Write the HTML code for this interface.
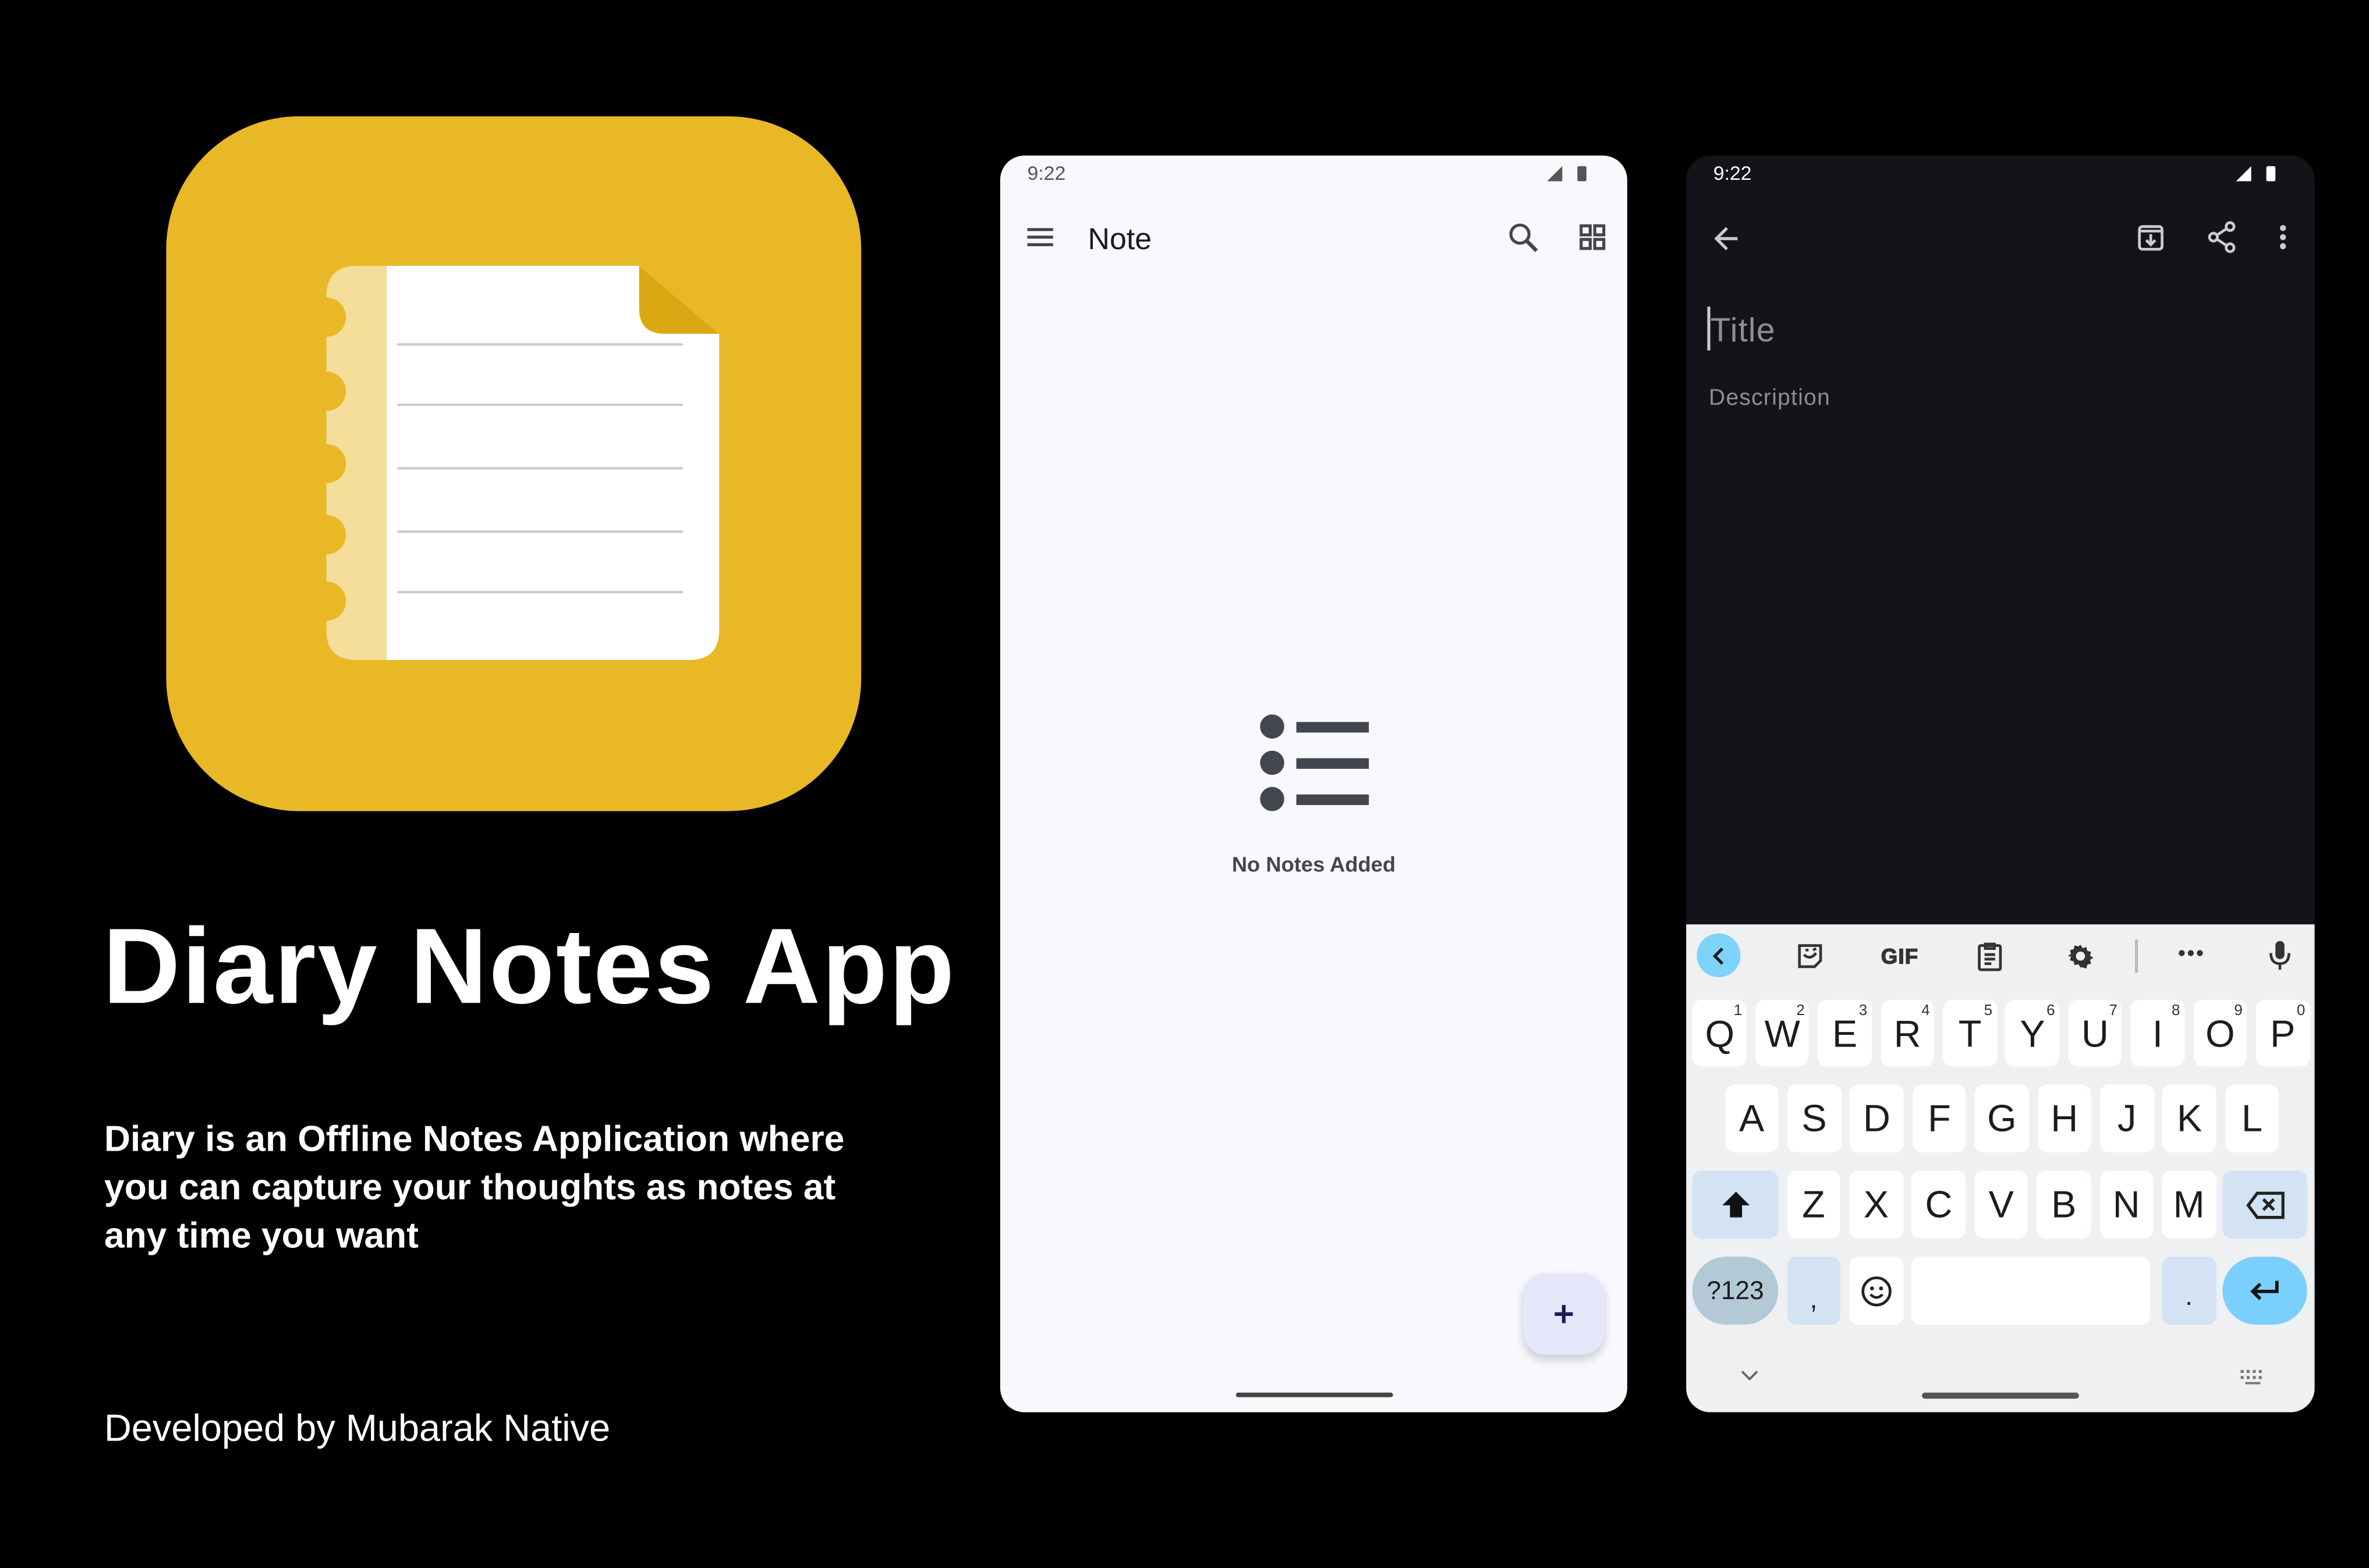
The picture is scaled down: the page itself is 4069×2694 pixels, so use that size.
<!DOCTYPE html>
<html><head><meta charset="utf-8"><style>
html,body{margin:0;padding:0;background:#000;}
body{width:4069px;height:2693px;overflow:hidden;position:relative;}
#w{position:absolute;left:0;top:0;width:1568px;height:1038px;transform:scale(2.5951);transform-origin:0 0;font-family:"Liberation Sans",sans-serif;}
.a{position:absolute;}
.t{position:absolute;white-space:nowrap;line-height:1;}
.k{position:absolute;background:#fff;border-radius:6px;width:35.7px;height:44.7px;font-size:25px;color:#1c1c1e;text-align:center;line-height:46px;}
.k sup{position:absolute;right:3px;top:3px;font-size:10px;color:#333;line-height:1;}
</style></head><body><div id="w">

<svg class="a" style="left:0;top:0" width="620" height="560" viewBox="0 0 620 560">
<rect x="110" y="77" width="460" height="460" rx="88" fill="#e9b826"/>
<path d="M236 176 H256 V437 H236 Q216 437 216 417 V411 A13 13 0 0 0 216 385 V367 A13 13 0 0 0 216 341 V320 A13 13 0 0 0 216 294 V272 A13 13 0 0 0 216 246 V223 A13 13 0 0 0 216 197 Q216 176 236 176Z" fill="#f4de9a"/>
<path d="M256 176 H423 L476 221 V417 Q476 437 456 437 H256Z" fill="#fff"/>
<path d="M423 176 L476 221 H440 Q423 221 423 204Z" fill="#d9a813"/>
<g stroke="#c8c8c8" stroke-width="1.5">
<line x1="263" y1="228" x2="452" y2="228"/><line x1="263" y1="268" x2="452" y2="268"/>
<line x1="263" y1="310" x2="452" y2="310"/><line x1="263" y1="352" x2="452" y2="352"/>
<line x1="263" y1="392" x2="452" y2="392"/></g>
</svg>

<div class="t" style="left:68px;top:605px;font-size:71px;font-weight:bold;color:#fff;letter-spacing:1px">Diary Notes App</div>
<div class="a" style="left:69px;top:739px;white-space:nowrap;font-size:24px;font-weight:bold;color:#fff;line-height:32px">Diary is an Offline Notes Application where<br>you can capture your thoughts as notes at<br>any time you want</div>
<div class="t" style="left:69px;top:934px;font-size:25px;color:#fff">Developed by Mubarak Native</div>

<div class="a" style="left:662px;top:103px;width:415px;height:832px;background:#f8f8fd;border-radius:16px;overflow:hidden">
<div class="t" style="left:18px;top:5px;font-size:13px;color:#555">9:22</div>
<svg class="a" style="left:360px;top:5px" width="30" height="14"><path d="M2 12 L12 2 V12Z" fill="#555"/><rect x="22" y="2" width="6" height="10" rx="1" fill="#555"/></svg>
<svg class="a" style="left:17px;top:46px" width="20" height="16"><rect x="1" y="2" width="17" height="2" fill="#44464f"/><rect x="1" y="7" width="17" height="2" fill="#44464f"/><rect x="1" y="12" width="17" height="2" fill="#44464f"/></svg>
<div class="t" style="left:58px;top:46px;font-size:20px;color:#1b1b1f">Note</div>
<svg class="a" style="left:336px;top:44px" width="22" height="22"><circle cx="8" cy="8" r="6" fill="none" stroke="#44464f" stroke-width="2"/><path d="M12.5 12.5 L19 19" stroke="#44464f" stroke-width="2.5"/></svg>
<svg class="a" style="left:383px;top:45px" width="20" height="20"><g fill="none" stroke="#44464f" stroke-width="2"><rect x="1.5" y="1.5" width="6" height="6"/><rect x="10.5" y="1.5" width="6" height="6"/><rect x="1.5" y="10.5" width="6" height="6"/><rect x="10.5" y="10.5" width="6" height="6"/></g></svg>
<svg class="a" style="left:170px;top:368px" width="80" height="70"><g fill="#44464f"><ellipse cx="10" cy="10" rx="8" ry="8"/><ellipse cx="10" cy="34" rx="8" ry="8"/><ellipse cx="10" cy="58" rx="8" ry="8"/><rect x="26" y="7" width="48" height="7"/><rect x="26" y="31" width="48" height="7"/><rect x="26" y="55" width="48" height="7"/></g></svg>
<div class="t" style="left:0;width:415px;text-align:center;top:462px;font-size:14px;font-weight:bold;color:#44464f">No Notes Added</div>
<div class="a" style="left:346px;top:740px;width:54px;height:54px;background:#e4e6fa;border-radius:15px;box-shadow:0 3px 6px rgba(0,0,0,0.18)"></div>
<svg class="a" style="left:365px;top:759px" width="16" height="16"><path d="M8 2V14M2 8H14" stroke="#1b1b4f" stroke-width="2.4"/></svg>
<div class="a" style="left:156px;top:819px;width:104px;height:3px;border-radius:2px;background:#444"></div>
</div>

<div class="a" style="left:1116px;top:103px;width:416px;height:832px;background:#131419;border-radius:16px;overflow:hidden">
<div class="t" style="left:18px;top:5px;font-size:13px;color:#fff">9:22</div>
<svg class="a" style="left:362px;top:5px" width="30" height="14"><path d="M2 12 L12 2 V12Z" fill="#fff"/><rect x="22" y="2" width="6" height="10" rx="1" fill="#fff"/></svg>
<svg class="a" style="left:17px;top:45px" width="20" height="20"><path d="M17 10H4M10 3L3 10L10 17" fill="none" stroke="#ccc" stroke-width="2"/></svg>
<svg class="a" style="left:298px;top:44px" width="20" height="22"><g fill="none" stroke="#ccc" stroke-width="1.8"><rect x="2" y="3" width="15" height="15" rx="2"/><path d="M2 6H17M9.5 8V15M6.5 12L9.5 15L12.5 12"/></g></svg>
<svg class="a" style="left:344px;top:43px" width="22" height="22"><g fill="none" stroke="#ccc" stroke-width="1.8"><circle cx="16" cy="4" r="2.6"/><circle cx="5" cy="11" r="2.6"/><circle cx="16" cy="18" r="2.6"/><path d="M7.3 9.7L13.7 5.4M7.3 12.3L13.7 16.6"/></g></svg>
<svg class="a" style="left:390px;top:44px" width="10" height="22"><g fill="#ccc"><circle cx="5" cy="4" r="2"/><circle cx="5" cy="10" r="2"/><circle cx="5" cy="16" r="2"/></g></svg>
<div class="a" style="left:14px;top:100px;width:1.5px;height:29px;background:#ccc"></div>
<div class="t" style="left:16px;top:105px;font-size:22px;color:#8e8f95;letter-spacing:0.5px">Title</div>
<div class="t" style="left:15px;top:153px;font-size:15px;color:#8e8f95;letter-spacing:0.5px">Description</div>

<div class="a" style="left:0;top:509px;width:416px;height:323px;background:#eff0f2">
<div class="a" style="left:7px;top:6px;width:29px;height:29px;border-radius:50%;background:#7dd3fc"></div>
<svg class="a" style="left:15px;top:14px" width="14" height="14"><path d="M9 2L4 7L9 12" fill="none" stroke="#1c1c1e" stroke-width="2"/></svg>
<svg class="a" style="left:72px;top:11px" width="20" height="20"><g fill="none" stroke="#333" stroke-width="1.8"><path d="M3 3H17V13L13 17H3Z"/><path d="M6 9Q10 13 14 8"/><path d="M7 6H9M12 6L14 5"/></g></svg>
<div class="t" style="left:129px;top:14px;font-size:14px;font-weight:bold;color:#333;letter-spacing:0.5px;-webkit-text-stroke:0.6px #333">GIF</div>
<svg class="a" style="left:191px;top:10px" width="20" height="22"><g fill="none" stroke="#333" stroke-width="1.8"><rect x="3" y="4" width="14" height="16" rx="1"/><path d="M7 3H13V6H7ZM6.5 10H13.5M6.5 13H13.5M6.5 16H11"/></g></svg>
<svg class="a" style="left:251px;top:11px" width="20" height="20"><path d="M10 2.5 l1.4 2.2 2.5-.7 .6 2.5 2.5.7-.7 2.5 2.2 1.4-2.2 1.4.7 2.5-2.5.7-.6 2.5-2.5-.7L10 17.5 8.6 15.3 6.1 16l-.6-2.5-2.5-.7.7-2.5L1.5 10 3.7 8.6 3 6.1l2.5-.7L6.1 2.9 8.6 3.6Z" fill="#333"/><circle cx="10" cy="10" r="3" fill="#eff0f2"/></svg>
<div class="a" style="left:297px;top:10px;width:1.5px;height:22px;background:#bbb"></div>
<svg class="a" style="left:324px;top:14px" width="20" height="10"><g fill="#333"><circle cx="4" cy="5" r="2"/><circle cx="10" cy="5" r="2"/><circle cx="16" cy="5" r="2"/></g></svg>
<svg class="a" style="left:385px;top:10px" width="16" height="22"><rect x="5" y="1" width="6" height="12" rx="3" fill="#333"/><path d="M2 9Q2 16 8 16Q14 16 14 9M8 16V20" fill="none" stroke="#333" stroke-width="1.8"/></svg>

<div class="k" style="left:4.4px;top:49.7px">Q<sup>1</sup></div>
<div class="k" style="left:45.8px;top:49.7px">W<sup>2</sup></div>
<div class="k" style="left:87.2px;top:49.7px">E<sup>3</sup></div>
<div class="k" style="left:128.6px;top:49.7px">R<sup>4</sup></div>
<div class="k" style="left:170px;top:49.7px">T<sup>5</sup></div>
<div class="k" style="left:211.4px;top:49.7px">Y<sup>6</sup></div>
<div class="k" style="left:252.8px;top:49.7px">U<sup>7</sup></div>
<div class="k" style="left:294.2px;top:49.7px">I<sup>8</sup></div>
<div class="k" style="left:335.6px;top:49.7px">O<sup>9</sup></div>
<div class="k" style="left:377px;top:49.7px">P<sup>0</sup></div>

<div class="k" style="left:25.5px;top:106.3px">A</div>
<div class="k" style="left:66.9px;top:106.3px">S</div>
<div class="k" style="left:108.3px;top:106.3px">D</div>
<div class="k" style="left:149.7px;top:106.3px">F</div>
<div class="k" style="left:191.1px;top:106.3px">G</div>
<div class="k" style="left:232.5px;top:106.3px">H</div>
<div class="k" style="left:273.9px;top:106.3px">J</div>
<div class="k" style="left:315.3px;top:106.3px">K</div>
<div class="k" style="left:356.7px;top:106.3px">L</div>

<div class="k" style="left:4.4px;top:163px;width:56.3px;background:#d3e3f3"></div>
<svg class="a" style="left:22px;top:175px" width="22" height="22"><path d="M11 2L20 11H15V19H7V11H2Z" fill="#111"/></svg>
<div class="k" style="left:66.5px;top:163px">Z</div>
<div class="k" style="left:107.9px;top:163px">X</div>
<div class="k" style="left:149.3px;top:163px">C</div>
<div class="k" style="left:190.7px;top:163px">V</div>
<div class="k" style="left:232.1px;top:163px">B</div>
<div class="k" style="left:273.5px;top:163px">N</div>
<div class="k" style="left:314.9px;top:163px">M</div>
<div class="k" style="left:354.9px;top:163px;width:56.6px;background:#d3e3f3"></div>
<svg class="a" style="left:370px;top:176px" width="28" height="20"><g fill="none" stroke="#222" stroke-width="2"><path d="M8 2H25V18H8L2 10Z"/><path d="M12 6L19 13M19 6L12 13"/></g></svg>

<div class="k" style="left:4.4px;top:219.6px;width:56.3px;height:45.4px;border-radius:23px;background:#b3c9d6;font-size:17px;line-height:46px">?123</div>
<div class="k" style="left:66.5px;top:219.6px;height:45.4px;background:#d3e3f3;line-height:56px;font-size:18px">,</div>
<div class="k" style="left:107.9px;top:219.6px;height:45.4px"></div>
<svg class="a" style="left:115px;top:232px" width="22" height="22"><g fill="none" stroke="#222" stroke-width="1.8"><circle cx="11" cy="11" r="9"/><path d="M7 13Q11 17 15 13"/></g><circle cx="8" cy="9" r="1.3" fill="#222"/><circle cx="14" cy="9" r="1.3" fill="#222"/></svg>
<div class="k" style="left:149.3px;top:219.6px;width:158px;height:45.4px"></div>
<div class="k" style="left:314.9px;top:219.6px;height:45.4px;background:#d3e3f3;line-height:52px;font-size:18px">.</div>
<div class="k" style="left:354.9px;top:219.6px;width:56.6px;height:45.4px;border-radius:23px;background:#7bcffd"></div>
<svg class="a" style="left:371px;top:233px" width="24" height="18"><g fill="none" stroke="#111" stroke-width="2.2"><path d="M20 3V10H4M9 5L4 10L9 15"/></g></svg>

<svg class="a" style="left:36px;top:295px" width="12" height="8"><path d="M1 1L6 6L11 1" fill="none" stroke="#666" stroke-width="1.5"/></svg>
<svg class="a" style="left:366px;top:294px" width="18" height="12"><g fill="#777"><rect x="1" y="1" width="2" height="2"/><rect x="5" y="1" width="2" height="2"/><rect x="9" y="1" width="2" height="2"/><rect x="13" y="1" width="2" height="2"/><rect x="1" y="5" width="2" height="2"/><rect x="5" y="5" width="2" height="2"/><rect x="9" y="5" width="2" height="2"/><rect x="13" y="5" width="2" height="2"/><rect x="4" y="9" width="10" height="1.5"/></g></svg>
<div class="a" style="left:156px;top:310px;width:104px;height:4px;border-radius:2px;background:#555"></div>
</div>
</div>

</div></body></html>
